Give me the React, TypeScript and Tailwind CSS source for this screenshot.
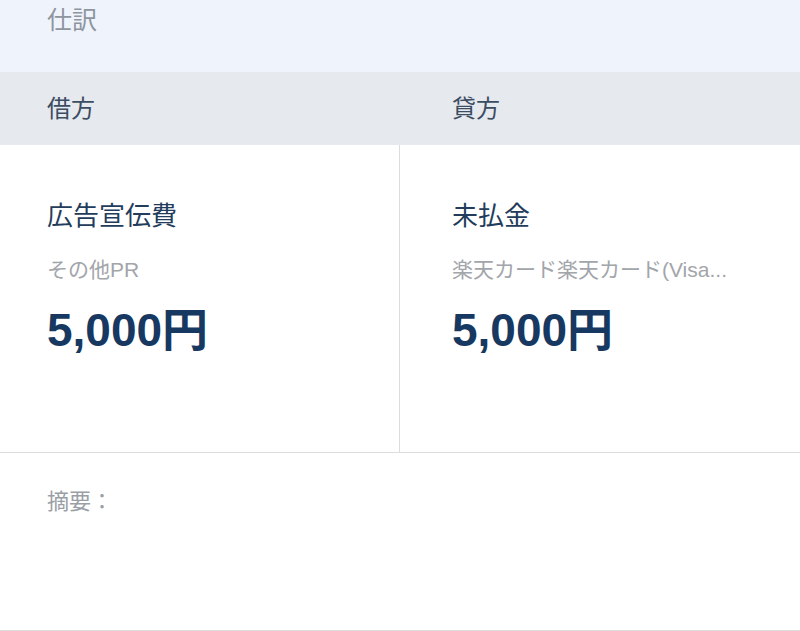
import React from 'react';

const font = { fontFamily: '"Liberation Sans", "Noto Sans CJK JP", sans-serif' };

type Side = { head: string; title: string; sub: string; amount: string };

const sides: Side[] = [
  { head: '借方', title: '広告宣伝費', sub: 'その他PR', amount: '5,000円' },
  { head: '貸方', title: '未払金', sub: '楽天カード楽天カード(Visa...', amount: '5,000円' },
];

const App: React.FC = () => {
  return (
    <div className="w-[800px] h-[631px] bg-white overflow-hidden" style={font}>
      {/* Section title */}
      <div className="h-[72px] bg-[#eff4fc] pl-[47px] pt-[2px]">
        <p className="text-[25px] leading-[36px] text-[#8e959f]">仕訳</p>
      </div>

      {/* Column headers */}
      <div className="h-[73px] bg-[#e6e9ee] grid grid-cols-[400px_400px]">
        <div className="flex items-center pl-[47px] text-[24px] text-[#3b4d63]">{sides[0].head}</div>
        <div className="flex items-center pl-[52px] text-[24px] text-[#3b4d63]">{sides[1].head}</div>
      </div>

      {/* Debit / credit */}
      <div className="h-[308px] grid grid-cols-[400px_400px] border-b border-[#dcdcdc]">
        {sides.map((s, i) => (
          <div
            key={s.head}
            className={`pt-[53px] min-w-0 ${i === 0 ? 'pl-[47px] pr-6 border-r border-[#dcdcdc]' : 'pl-[52px] pr-4'}`}
          >
            <p className="text-[26px] leading-[36px] text-[#233c5b]">{s.title}</p>
            <p className="mt-[22px] text-[21px] leading-[28px] text-[#a2a5aa] whitespace-nowrap">{s.sub}</p>
            <p className="mt-[20px] text-[46px] leading-[53px] font-bold text-[#173860]">{s.amount}</p>
          </div>
        ))}
      </div>

      {/* Memo */}
      <div className="h-[178px] pl-[47px] pt-[33px] border-b border-[#dcdcdc]">
        <p className="text-[22px] leading-[32px] text-[#9a9fa6]">摘要：</p>
      </div>
    </div>
  );
};

export default App;
